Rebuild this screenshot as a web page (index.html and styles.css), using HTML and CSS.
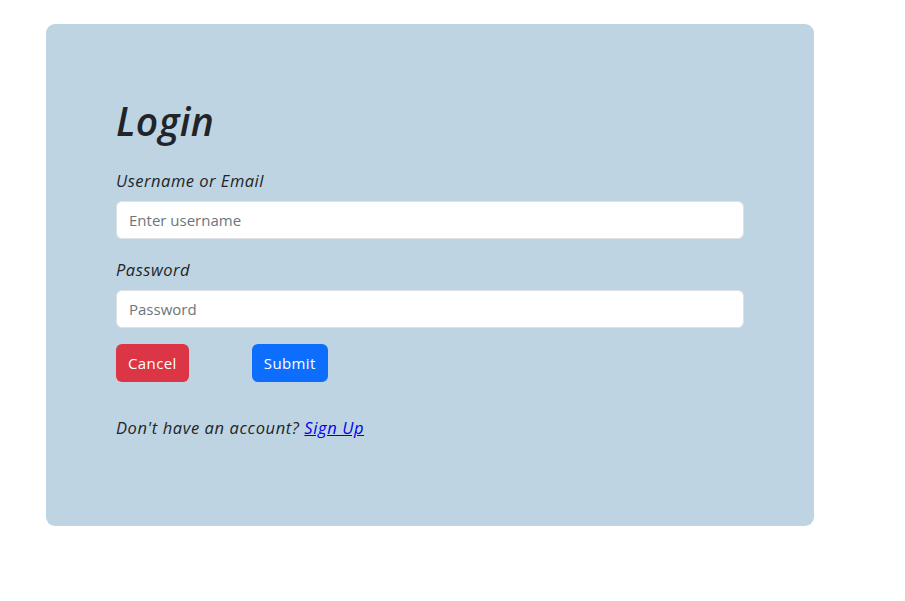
FILE: index.html
```html
<!DOCTYPE html>
<html lang="en">
<head>
<meta charset="utf-8">
<title>Login</title>
<link rel="stylesheet" href="styles.css">
</head>
<body>
<main class="card">
  <h1 class="title">Login</h1>
  <form class="form">
    <div class="field">
      <label class="label" for="user">Username or Email</label>
      <input class="input" id="user" type="text" placeholder="Enter username">
    </div>
    <div class="field">
      <label class="label" for="pass">Password</label>
      <input class="input" id="pass" type="password" placeholder="Password">
    </div>
    <div class="actions">
      <button type="button" class="btn btn-cancel">Cancel</button>
      <button type="submit" class="btn btn-submit">Submit</button>
    </div>
  </form>
  <p class="footer">Don't have an account? <a href="#" class="link">Sign Up</a></p>
</main>
</body>
</html>
```

FILE: styles.css
```css
* { box-sizing: border-box; }
html, body { margin: 0; padding: 0; background: #fff; }
body {
  font-family: "Open Sans", "Noto Sans", sans-serif;
  color: #212529;
  font-size: 16px;
  line-height: 24px;
}
.card {
  margin: 24px 0 0 46px;
  width: 768px;
  height: 502px;
  background: #bfd4e2;
  border-radius: 9px;
  padding: 73px 70px 70px;
}
.title {
  margin: 0 0 24px;
  font-size: 39px;
  line-height: 48px;
  font-weight: 600;
  font-style: italic;
  letter-spacing: 0.4px;
}
.form { display: flex; flex-direction: column; }
.field { display: flex; flex-direction: column; margin-bottom: 19px; }
.field:nth-child(2) { margin-bottom: 16px; }
.label {
  font-style: italic;
  font-size: 16.5px;
  letter-spacing: 0.5px;
  margin-bottom: 8px;
}
.input {
  height: 38px;
  width: 628px;
  border: 1px solid #dee2e6;
  border-radius: 6px;
  padding: 6px 12px;
  font-family: inherit;
  font-size: 15px;
  color: #212529;
  background: #fff;
  outline: none;
}
.input::placeholder { color: #6c757d; opacity: 1; }
.actions { display: flex; gap: 63px; }
.btn {
  height: 38px;
  padding: 0 12px;
  border: none;
  border-radius: 6px;
  color: #fff;
  font-family: inherit;
  font-size: 15px;
  letter-spacing: 0.4px;
  line-height: 38px;
}
.btn-cancel { background: #dc3545; }
.btn-submit { background: #0d6efd; }
.footer {
  margin: 34px 0 0;
  font-style: italic;
  font-size: 16.5px;
  letter-spacing: 0.6px;
}
.link { color: #0000ee; text-decoration: underline; }
```
